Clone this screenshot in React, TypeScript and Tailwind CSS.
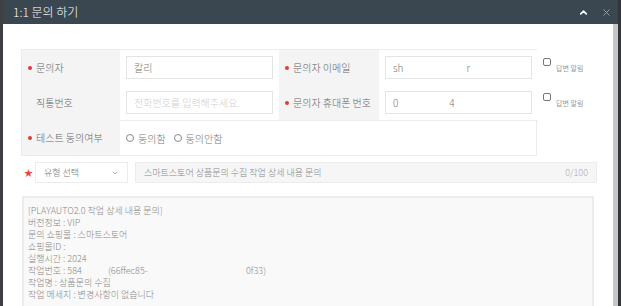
import { ChevronUp, X, ChevronDown } from "lucide-react";

const font = { fontFamily: '"Noto Sans CJK KR", "Noto Sans", sans-serif' };

function Label({ text, req }: { text: string; req?: boolean }) {
  return (
    <div className="bg-[#f4f4f4] flex items-center pl-[6px] text-[10px] text-[#666] font-light">
      <span className={`w-[4px] h-[4px] rounded-full bg-[#e03a3a] ${req ? "" : "invisible"}`} />
      <span className="ml-[4px]">{text}</span>
    </div>
  );
}

function Field({ children }: { children: React.ReactNode }) {
  return (
    <div className="bg-white flex items-center px-[6px]">
      <div className="h-[23px] w-full border border-[#e4e4e4] flex items-center px-[7px] text-[10px] font-light text-[#777]">
        {children}
      </div>
    </div>
  );
}

function Notify() {
  return (
    <div className="flex items-start gap-[5px] pl-[6px] text-[7px] text-[#999] -mt-[2px]">
      <span className="w-[8px] h-[8px] border border-[#777] rounded-[2px] bg-white" />
      <span className="mt-[5px]">답변 알림</span>
    </div>
  );
}

const lines = [
  "[PLAYAUTO2.0 작업 상세 내용 문의]",
  "버전정보 : VIP",
  "문의 쇼핑몰 : 스마트스토어",
  "쇼핑몰ID :",
  "실행시간 : 2024",
  "작업번호 : 584",
  "작업명 : 상품문의 수집",
  "작업 메세지 : 변경사항이 없습니다",
];

export default function App() {
  return (
    <div className="w-[621px] h-[306px] overflow-hidden bg-[#1f2c40] flex flex-col" style={font}>
      <div className="h-[3px] bg-[#1d2a3f]" />
      <div className="flex-1 flex flex-col border-l-[3px] border-l-[#3d3f42] border-r-[3px] border-r-[#33363a]">
        <div className="h-[24px] bg-[#3a4751] flex items-center pl-[10px] pr-[6px] text-white text-[12px] font-light">
          <span>1:1 문의 하기</span>
          <div className="ml-auto flex items-center gap-[12px]">
            <ChevronUp size={11} strokeWidth={3.5} className="text-white" />
            <X size={11} strokeWidth={2} className="text-[#9aa3aa]" />
          </div>
        </div>
        <div className="flex-1 flex bg-white">
          <div className="flex-1 pl-[18px] pt-[25px]">
            <div className="flex">
              <div className="w-[516px] border border-[#ececec] grid grid-cols-[98px_159px_100px_159px] grid-rows-[35px_35px_35px]">
                <Label text="문의자" req />
                <Field>칼리</Field>
                <Label text="문의자 이메일" req />
                <Field>
                  <span>sh</span>
                  <span className="ml-[63px]">r</span>
                </Field>
                <Label text="직통번호" />
                <Field>
                  <span className="text-[#cfcfcf]">전화번호를 입력해주세요.</span>
                </Field>
                <Label text="문의자 휴대폰 번호" req />
                <Field>
                  <span>0</span>
                  <span className="ml-[51px]">4</span>
                </Field>
                <Label text="테스트 동의여부" req />
                <div className="col-span-3 border-t border-[#ececec] flex items-center pl-[6px] gap-[8px] text-[10px] text-[#777] font-light">
                  <label className="flex items-center gap-[4px]">
                    <span className="w-[8px] h-[8px] rounded-full border border-[#888]" />
                    동의함
                  </label>
                  <label className="flex items-center gap-[4px]">
                    <span className="w-[8px] h-[8px] rounded-full border border-[#888]" />
                    동의안함
                  </label>
                </div>
              </div>
              <div className="flex flex-col">
                <div className="h-[35px] flex items-center">
                  <Notify />
                </div>
                <div className="h-[35px] flex items-center">
                  <Notify />
                </div>
              </div>
            </div>
            <div className="flex items-center mt-[6px] h-[21px]">
              <span className="w-[14px] pl-[3px] text-[#e04848] text-[9px]">★</span>
              <div className="w-[93px] h-full border border-[#ececec] flex items-center px-[8px] text-[9px] text-[#777] font-light">
                <span>유형 선택</span>
                <ChevronDown size={8} className="ml-auto text-[#888]" />
              </div>
              <div className="ml-[7px] w-[462px] h-full bg-[#f6f6f6] border border-[#ececec] flex items-center px-[8px] text-[9px] text-[#888] font-light">
                <span>스마트스토어 상품문의 수집 작업 상세 내용 문의</span>
                <span className="ml-auto text-[#aaa]">0/100</span>
              </div>
            </div>
            <div className="mt-[13px] ml-[1px] w-[572px] h-[120px] bg-[#f9f9f9] border-2 border-[#ececec] pl-[4px] pt-[7px] text-[9px] leading-[12px] text-[#888] font-light">
              {lines.map((l, i) => (
                <div key={i} className="flex">
                  <span className="w-[80px] whitespace-nowrap">{l}</span>
                  {i === 5 && (
                    <>
                      <span className="w-[138px]">(66ffec85-</span>
                      <span>0f33)</span>
                    </>
                  )}
                </div>
              ))}
            </div>
          </div>
          <div className="w-[5px] bg-[#c6c6c6]" />
        </div>
      </div>
    </div>
  );
}
